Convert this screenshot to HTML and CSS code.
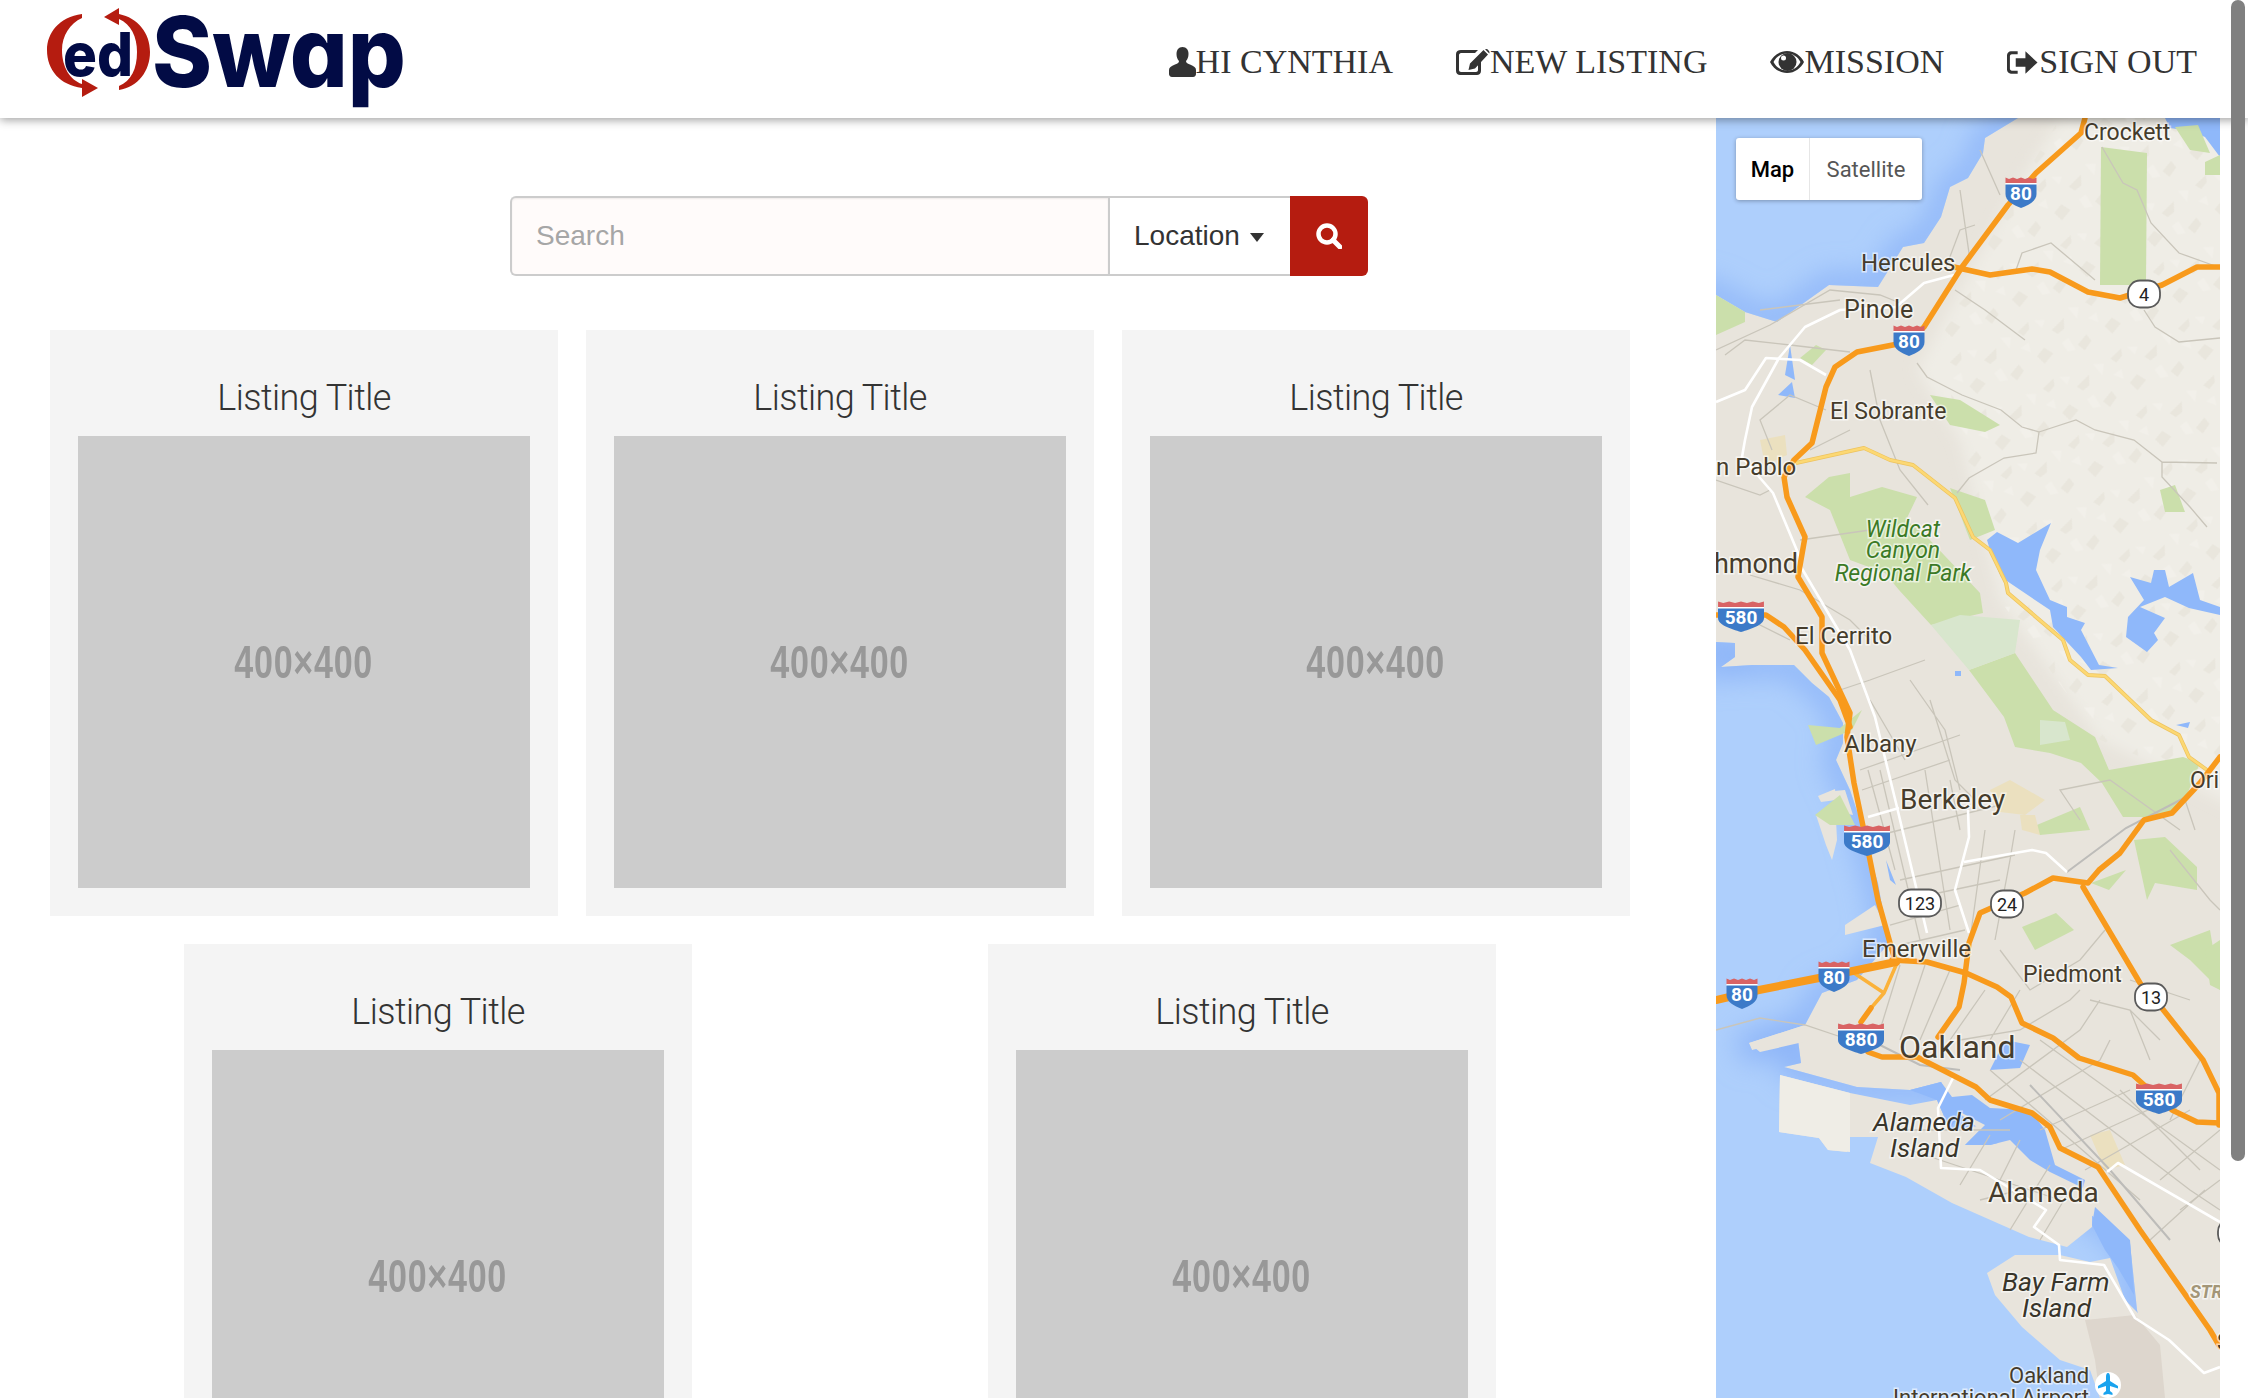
FILE: index.html
```html
<!DOCTYPE html>
<html lang="en">
<head>
<meta charset="utf-8">
<title>edSwap</title>
<link rel="stylesheet" href="styles.css">
</head>
<body>
<header class="topbar">
  <a class="logo" href="#" aria-label="edSwap">
    <svg class="logo-svg" viewBox="0 0 420 118" width="420" height="118">
      <path class="logo-red" d="M82 14C59 17 47 33 47 50C47 70 60 85 82 88L82 97L98 88L82 79L82 84C70 80 62 67 62 50C62 36 70 23 82 18Z"/>
      <path class="logo-red" d="M104 17L119 25L119 19C131 24 137 37 137 52C137 69 131 81 119 86L119 90C138 87 150 71 150 52C150 33 138 18 119 14L119 8Z"/>
      <text class="logo-ed" x="63" y="76" textLength="70" lengthAdjust="spacingAndGlyphs">ed</text>
      <text class="logo-swap" x="152" y="87" textLength="254" lengthAdjust="spacingAndGlyphs">Swap</text>
    </svg>
  </a>
  <nav class="nav">
    <a class="nav-item" href="#">
      <svg class="nav-icon" width="27" height="30" viewBox="0 0 27 30"><path d="M13.500 0C9.500 0 7.500 3 7.500 7C7.500 10 8.500 12.500 10 14C10 15.500 9 16.500 6 17.500C2 19 0 20.500 0 23V27C0 28.500 1 30 3 30H24C26 30 27 28.500 27 27V23C27 20.500 25 19 21 17.500C18 16.500 17 15.500 17 14C18.500 12.500 19.500 10 19.500 7C19.500 3 17.500 0 13.500 0Z"/></svg>
      <span>HI CYNTHIA</span>
    </a>
    <a class="nav-item" href="#">
      <svg class="nav-icon" width="34" height="27" viewBox="0 0 34 27"><path d="M5 1H22L19 4H5C4 4 3 5 3 6V21C3 22 4 23 5 23H20C21 23 22 22 22 21V15L25 12V22C25 24.500 23 26 21 26H4C2 26 0 24.500 0 22V5C0 2.500 2 1 5 1Z"/><path d="M27.500 1L32 5.500L19 19.500L12.500 21L14 14.500ZM29 0.200L30.500 0C31.500 0 33.500 2 33.500 3.500L33.300 4.400Z"/></svg>
      <span>NEW LISTING</span>
    </a>
    <a class="nav-item" href="#">
      <svg class="nav-icon" width="34" height="24" viewBox="0 0 34 24"><path fill-rule="evenodd" d="M17 1C25 1 31 6 34 12C31 18 25 23 17 23C9 23 3 18 0 12C3 6 9 1 17 1ZM17 3.500C11 3.500 6 7 3.500 12C6 17 11 20.500 17 20.500C23 20.500 28 17 30.500 12C28 7 23 3.500 17 3.500Z"/><circle cx="17.500" cy="12" r="9"/><circle class="nav-glint" cx="13.500" cy="8" r="2.500"/></svg>
      <span>MISSION</span>
    </a>
    <a class="nav-item" href="#">
      <svg class="nav-icon" width="32" height="25" viewBox="0 0 33 25"><path d="M4 1H11V4H5C4 4 3 5 3 6V19C3 20 4 21 5 21H11V24H4C2 24 0 22 0 20V5C0 3 2 1 4 1Z"/><path d="M19 1L31.500 12.500L19 24V17H9V8H19Z"/></svg>
      <span>SIGN OUT</span>
    </a>
  </nav>
</header>

<div class="page">
  <main class="content">
    <form class="search">
      <input class="search-input" type="text" placeholder="Search">
      <button class="search-loc" type="button">Location <span class="caret"></span></button>
      <button class="search-go" type="button" aria-label="Search">
        <svg width="26" height="26" viewBox="0 0 26 26"><circle class="search-ring" cx="11" cy="11" r="8.500"/><path class="search-handle" d="M17 17L24 24"/></svg>
      </button>
    </form>
    <section class="listings">
      <article class="card"><h2 class="card-title">Listing Title</h2><div class="thumb"><span class="thumb-label">400×400</span></div></article>
      <article class="card"><h2 class="card-title">Listing Title</h2><div class="thumb"><span class="thumb-label">400×400</span></div></article>
      <article class="card"><h2 class="card-title">Listing Title</h2><div class="thumb"><span class="thumb-label">400×400</span></div></article>
      <article class="card"><h2 class="card-title">Listing Title</h2><div class="thumb"><span class="thumb-label">400×400</span></div></article>
      <article class="card"><h2 class="card-title">Listing Title</h2><div class="thumb"><span class="thumb-label">400×400</span></div></article>
    </section>
  </main>

  <aside class="map">
    <svg class="map-svg" viewBox="1716 118 504 1280" width="504" height="1280">
      <defs>
        <filter id="soft" x="-10%" y="-10%" width="120%" height="120%"><feGaussianBlur stdDeviation="14"/></filter>
        <filter id="softer" x="-10%" y="-10%" width="120%" height="120%"><feGaussianBlur stdDeviation="7"/></filter>
        <pattern id="tex" width="74" height="62" patternUnits="userSpaceOnUse" patternTransform="rotate(-24)">
          <path class="tex-dark" d="M6 8L20 3L18 10L10 14ZM38 20L54 14L50 24L42 26ZM14 38L24 33L30 42L18 48ZM56 44L68 38L70 46L60 52Z"/>
          <path class="tex-light" d="M26 4L36 8L30 14ZM2 24L12 22L10 32ZM42 36L50 34L52 48L44 46ZM62 6L72 10L66 20Z"/>
        </pattern>
        <path id="north-bay" d="M1650 60H2050L2018 118L1985 138L1983 153L1968 178L1950 187L1941 217L1924 243L1903 247L1878 287L1829 285L1777 322L1745 312L1716 295L1650 280Z"/>
        <path id="main-bay" d="M1650 642L1716 642L1735 643L1735 657L1721 667L1752 665L1794 665L1812 683L1829 697L1843 723L1843 743L1836 760L1850 790L1861 823L1868 850L1878 883L1884 917L1889 943L1857 980L1822 993L1805 1025L1749 1043L1752 1050L1798 1040L1801 1063L1784 1067L1857 1087L1910 1090L1941 1082L1955 1110L2070 1200L2130 1243L2137 1310L2170 1450H1650Z"/>
        <clipPath id="clip-north"><use href="#north-bay"/></clipPath>
        <clipPath id="clip-main"><use href="#main-bay"/></clipPath>
        <path id="shield" d="M-15.500 -10L-15.500 -15.500L-12 -14L-8 -15.500L-4 -14L0 -15.500L4 -14L8 -15.500L12 -14L15.500 -15.500L15.500 -10Z"/>
      </defs>

      <rect class="land" x="1716" y="118" width="504" height="1280"/>
      <path class="hills" filter="url(#softer)" d="M2010 200L2060 118H2240V810L2100 740L2000 600L1980 520L1960 440L1917 370Z"/>
      <path class="texture" d="M1940 340L2010 200L2060 118H2220V790L2100 740L2000 600L1980 520L1960 440Z"/>

      <use class="water" href="#north-bay"/>
      <g clip-path="url(#clip-north)"><use class="water-edge" href="#north-bay" filter="url(#soft)"/></g>
      <use class="water" href="#main-bay"/>
      <g clip-path="url(#clip-main)"><use class="water-edge" href="#main-bay" filter="url(#soft)"/></g>
      <path class="water-flat" d="M2165 118H2220V157L2205 137L2190 131L2170 128Z"/>

      <!-- islands and shoreline land -->
      <path class="land" d="M1780 1075L1850 1093L1910 1105L1937 1100L1950 1130L1985 1125L1965 1145L1990 1145L2010 1140L2030 1160L2050 1172L2083 1188L2092 1207L2092 1227L2067 1247L2029 1237L1952 1203L1906 1177L1870 1163L1878 1137L1847 1137L1847 1152L1828 1150L1819 1138L1779 1132Z"/>
      <path class="pale-land" d="M1780 1075L1850 1093L1850 1152L1828 1150L1819 1138L1779 1132Z"/>
      <path class="land" d="M2015 1255L2060 1255L2090 1262L2110 1258L2125 1300L2137 1312L2160 1340L2170 1398H2100L2090 1370L2060 1360L2022 1327L1995 1295L1987 1273Z"/>
      <path class="tarmac" d="M2085 1320L2135 1315L2160 1345L2165 1398H2100L2095 1360Z"/>
      <path class="land" d="M1749 1043L1805 1025L1822 1012L1812 1040L1760 1052Z"/>
      <path class="land" d="M1834 791L1845 790L1853 815L1838 812ZM1818 796L1835 789L1836 800L1821 802ZM1837 840L1832 860L1826 845L1816 815L1836 820Z"/>
      <path class="land" d="M1845 925L1875 905L1885 925L1845 935Z"/>
      <path class="water-flat" d="M1987 540L1997 532L2018 543L2051 523L2040 550L2036 570L2050 600L2067 607L2067 617L2085 623L2081 630L2099 665L2118 668L2091 670L2081 657L2053 627L2050 610L2001 577L1990 550Z"/>
      <path class="water-flat" d="M2130 577L2151 583L2154 570L2165 570L2169 587L2193 573L2200 600L2220 607V615L2189 608L2165 597L2140 607L2165 618L2154 633L2158 640L2147 652L2126 637L2128 617L2144 600Z"/>
      <path class="water-flat" d="M1910 1090L1941 1082L1952 1097L1972 1095L1990 1108L2030 1110L2045 1130L2055 1165L2085 1180L2083 1188L2050 1172L2030 1160L2010 1140L1990 1145L1965 1145L1985 1125L1960 1112L1950 1130L1937 1100Z"/>
      <path class="water-flat" d="M1790 345L1795 380L1785 375ZM2095 1207L2130 1240L2134 1295L2118 1268L2105 1250L2092 1225Z"/>
      <path class="water-flat" d="M1778 395L1792 382L1795 398ZM1955 671H1961V676H1955ZM2016 702L2022 705L2023 712L2018 712ZM2176 725L2190 722L2188 728ZM1886 860L1896 885L1890 880ZM1990 1070L2005 1040L2030 1045L2020 1068Z"/>

      <!-- parks -->
      <g class="park">
        <path d="M2101 147L2147 153L2146 285L2100 285Z"/>
        <path d="M1805 497L1829 477L1850 473L1850 497L1882 487L1917 497L1906 520L1927 537L1980 593L1983 613L1931 625L1899 590L1885 573L1850 560L1830 510Z"/>
        <path d="M1969 670L2015 653L2053 710L2095 737L2109 770L2183 757L2200 763L2186 797L2165 817L2123 817L2102 783L2081 763L2050 753L2015 747L2004 717Z"/>
        <path d="M2032 827L2080 807L2090 830L2040 835Z"/>
        <path d="M2134 840L2165 837L2197 867L2197 890L2155 883L2147 900Z"/>
        <path d="M2022 927L2056 913L2074 930L2035 950Z"/>
        <path d="M2091 883L2126 870L2109 890Z"/>
        <path d="M1930 395L1960 400L2000 425L1985 432L1950 425Z"/>
        <path d="M1716 295L1745 312L1745 322L1716 335Z"/>
        <path d="M1950 488L1985 500L1995 530L1970 540Z"/>
        <path d="M2160 490L2175 485L2185 512L2165 512Z"/>
        <path d="M2175 127L2198 125L2210 153L2190 150Z"/>
        <path d="M2205 162L2220 155V175L2205 175Z"/>
        <path d="M1816 345L1826 350L1812 365L1800 358Z"/>
        <path d="M1815 815L1840 795L1855 825L1830 825Z"/>
        <path d="M1862 710L1852 730L1816 745L1812 735L1808 725L1840 728Z"/>
        <path d="M2170 945L2210 930L2220 990L2190 960Z"/>
        <path d="M2220 940L2205 950L2210 985L2220 990Z"/>
      </g>
      <path class="park-pale" d="M1931 625L1960 615L2020 620L2015 653L1969 670Z"/>
      <path class="park-pale" d="M2040 720L2065 722L2070 740L2040 745Z"/>
      <path class="sand" d="M1760 440L1785 435L1787 455L1765 465ZM1990 790L2010 780L2045 800L2025 815L2000 812ZM2020 815L2035 815L2040 835L2022 830ZM2090 1135L2110 1130L2125 1165L2105 1170Z"/>

      <!-- minor streets -->
      <g class="streets">
        <path d="M1716 350L1770 325L1830 290L1880 295L1905 305"/>
        <path d="M1725 355L1745 340L1790 345L1850 352"/>
        <path d="M1960 190L1970 260M1980 150L2000 195M1945 270L1960 230L1975 225M1955 290L1985 310L2025 340"/>
        <path d="M1870 370L1880 420L1900 470L1928 505M1917 363L1927 377L1962 395L2001 410L2022 427L2039 432L2036 453L2004 458L1969 478L1957 493"/>
        <path d="M2039 432L2076 420L2095 430L2134 440L2162 462L2217 463M2162 462V477L2190 507L2207 527"/>
        <path d="M2016 270L2022 253L2051 243L2095 280M2144 310L2155 327L2179 342L2220 338M2102 147L2123 183L2137 190L2151 223L2179 253L2218 267"/>
        <path d="M1826 410L1790 395L1760 420L1772 450M1850 430L1810 450M1760 310L1840 300M1716 480L1760 495L1770 490"/>
        <path d="M1750 575L1800 590L1850 620L1870 640M1750 620L1790 640M1840 690L1870 680L1925 660M1800 540L1870 530M2080 820L2060 790L2110 780L2180 830"/>
        <path d="M1860 770L1960 735M1862 790L1950 760M1880 835L2000 805M1900 880L2015 855M1905 900L2000 880M1890 925L1960 905M1900 945L1965 930"/>
        <path d="M1868 770L1895 870M1880 770L1920 940M1925 770L1950 930M1950 780L1960 830M1930 700L1955 780L1975 800M1910 680L1945 730L1960 790M1985 830L1970 940M2015 830L2010 860L1995 940M1870 700L1905 760"/>
        <path d="M1900 965L1880 1030M1925 965L1900 1040M1950 970L1920 1040M1985 990L1950 1040M2020 990L1990 1040M1960 1040L2020 1030L2070 1000L2080 990M1985 1100L2080 1030L2100 1000M2000 1120L2100 1060L2110 1040"/>
        <path d="M2040 1130L2130 1090M2060 1150L2170 1100M2085 1170L2190 1110M2020 1060L2190 1190L2220 1210M1990 1070L2140 1200M2040 1040L2220 1170M2120 1090L2200 1170M2150 1240L2205 1190M2000 950L2030 990L2080 960L2105 930M2090 1000L2130 1010L2160 1040M2150 1060L2130 1010"/>
        <path d="M1900 1130L2010 1130M1910 1150L2060 1200M1990 1135L1960 1185M2020 1140L1990 1200M2050 1165L2010 1230M2070 1190L2040 1240M1980 1200L2020 1190"/>
        <path d="M2160 1180L2220 1130M2180 1210L2220 1180M2200 1060L2170 1120M1716 1030L1760 1018L1805 1025L1850 1040"/>
        <path d="M2170 850L2210 900L2220 910M2205 780L2185 800L2195 830M2130 980L2190 1000"/>
      </g>
      <path class="rail" d="M2067 872L2126 828L2186 797"/>
      <path class="rail" d="M1880 1045L1920 1065L1960 1070M2030 1085L2110 1170L2170 1240"/>

      <!-- surface roads -->
      <g class="white-road">
        <path d="M1954 275L1924 283L1896 307L1840 310L1805 327L1779 358L1752 407L1745 440L1742 457L1773 493L1798 553L1801 567L1850 650L1875 717L1896 803L1927 933"/>
        <path d="M1716 402L1745 390L1766 358L1800 360L1826 375"/>
        <path d="M1868 817L1899 808M1968 810L1969 837L1955 890L1969 933M1964 862L2032 850L2046 853L2067 872"/>
        <path d="M1953 1078L1938 1108L1941 1168L1980 1170L2046 1210L2034 1227L2059 1245L2060 1260L2104 1265L2135 1318L2169 1340L2204 1373L2220 1367"/>
        <path d="M2107 1172L2118 1163L2220 1222"/>
      </g>

      <!-- state routes -->
      <path class="yellow-case" d="M1796 463L1864 448L1890 460L1913 465L1955 498L1973 537L1990 550L2006 583L2008 593L2063 640L2070 660L2088 675L2105 676L2151 720L2179 735L2189 757L2207 770"/>
      <path class="yellow" d="M1796 463L1864 448L1890 460L1913 465L1955 498L1973 537L1990 550L2006 583L2008 593L2063 640L2070 660L2088 675L2105 676L2151 720L2179 735L2189 757L2207 770"/>
      <g class="ramp">
        <path d="M1897 963L1884 993L1871 1008M1854 973L1884 993"/>
      </g>

      <!-- freeways -->
      <g class="freeway">
        <path d="M2085 118L2081 133L2036 173L2008 205L1962 267L1924 327L1908 342L1857 352L1835 367L1826 387L1812 443L1794 460L1784 477L1787 497L1805 537L1798 577L1822 617L1822 653L1850 713L1847 737L1854 783L1868 850L1878 900L1892 950L1896 963"/>
        <path class="bridge" d="M1896 962L1819 978L1759 990L1716 1000"/>
        <path d="M1716 615L1766 615L1784 627L1805 650L1840 700L1850 727"/>
        <path d="M1954 267L1990 275L2032 269L2050 272L2088 292L2120 298L2162 285L2197 267L2220 267"/>
        <path d="M2220 757L2200 783L2172 813L2144 820L2120 853L2099 870L2088 883L2053 878L2025 893L1980 913L1969 943L1964 983L1959 1007L1938 1037"/>
        <path d="M1892 960L1927 962L1966 973L1997 987L2011 997L2022 1023L2053 1038L2079 1058L2133 1075L2172 1110L2197 1122L2220 1123"/>
        <path d="M2083 887L2140 983L2161 1007L2203 1060L2219 1093V1125"/>
        <path d="M1871 1008L1861 1022"/>
        <path d="M1868 1052L1882 1057L1917 1057L1976 1087L1990 1100L2032 1113L2050 1127L2060 1148L2098 1167L2140 1230L2210 1330L2220 1347"/>
      </g>

      <!-- labels -->
      <g class="labels">
        <text class="f23" x="2084" y="140">Crockett</text>
        <text class="f24" x="1861" y="271">Hercules</text>
        <text class="f25" x="1844" y="318">Pinole</text>
        <text class="f23" x="1830" y="419">El Sobrante</text>
        <text class="f24" x="1716" y="475">n Pablo</text>
        <text class="f27 end" x="1798" y="573">Richmond</text>
        <text class="f24" x="1795" y="644">El Cerrito</text>
        <text class="f24" x="1844" y="752">Albany</text>
        <text class="f28" x="1900" y="809">Berkeley</text>
        <text class="f23" x="2190" y="788">Ori</text>
        <text class="f24" x="1862" y="957">Emeryville</text>
        <text class="f23" x="2023" y="982">Piedmont</text>
        <text class="f32" x="1899" y="1058">Oakland</text>
        <text class="f26 it" x="1873" y="1131">Alameda</text>
        <text class="f26 it" x="1890" y="1157">Island</text>
        <text class="f28" x="1988" y="1202">Alameda</text>
        <text class="f26 it" x="2002" y="1291">Bay Farm</text>
        <text class="f26 it" x="2022" y="1317">Island</text>
        <text class="f22" x="2009" y="1383">Oakland</text>
        <text class="f22" x="1893" y="1405">International Airport</text>
        <text class="f23" x="2217" y="1350">San</text>
        <text class="str" x="2190" y="1298">STR</text>
        <text class="green mid" x="1903" y="537">Wildcat</text>
        <text class="green mid" x="1903" y="558">Canyon</text>
        <text class="green mid" x="1903" y="581">Regional Park</text>
      </g>

      <!-- interstate shields -->
      <g class="shield" transform="translate(2021 193)"><use class="sh-red" href="#shield"/><rect class="sh-line" x="-15.500" y="-10" width="31" height="2"/><path class="sh-blue" d="M-15.500 -8.500H15.500V1C15.500 8 8 12 0 15C-8 12 -15.500 8 -15.500 1Z"/><text y="6.500">80</text></g>
      <g class="shield" transform="translate(1909 341)"><use class="sh-red" href="#shield"/><rect class="sh-line" x="-15.500" y="-10" width="31" height="2"/><path class="sh-blue" d="M-15.500 -8.500H15.500V1C15.500 8 8 12 0 15C-8 12 -15.500 8 -15.500 1Z"/><text y="6.500">80</text></g>
      <g class="shield" transform="translate(1834 977)"><use class="sh-red" href="#shield"/><rect class="sh-line" x="-15.500" y="-10" width="31" height="2"/><path class="sh-blue" d="M-15.500 -8.500H15.500V1C15.500 8 8 12 0 15C-8 12 -15.500 8 -15.500 1Z"/><text y="6.500">80</text></g>
      <g class="shield" transform="translate(1742 994)"><use class="sh-red" href="#shield"/><rect class="sh-line" x="-15.500" y="-10" width="31" height="2"/><path class="sh-blue" d="M-15.500 -8.500H15.500V1C15.500 8 8 12 0 15C-8 12 -15.500 8 -15.500 1Z"/><text y="6.500">80</text></g>
      <g class="shield" transform="translate(1741 617)"><use class="sh-red wide" href="#shield"/><rect class="sh-line" x="-23" y="-10" width="46" height="2"/><path class="sh-blue" d="M-23 -8.500H23V1C23 8 10 12 0 15C-10 12 -23 8 -23 1Z"/><text y="6.500">580</text></g>
      <g class="shield" transform="translate(1867 841)"><use class="sh-red wide" href="#shield"/><rect class="sh-line" x="-23" y="-10" width="46" height="2"/><path class="sh-blue" d="M-23 -8.500H23V1C23 8 10 12 0 15C-10 12 -23 8 -23 1Z"/><text y="6.500">580</text></g>
      <g class="shield" transform="translate(2159 1099)"><use class="sh-red wide" href="#shield"/><rect class="sh-line" x="-23" y="-10" width="46" height="2"/><path class="sh-blue" d="M-23 -8.500H23V1C23 8 10 12 0 15C-10 12 -23 8 -23 1Z"/><text y="6.500">580</text></g>
      <g class="shield" transform="translate(1861 1039)"><use class="sh-red wide" href="#shield"/><rect class="sh-line" x="-23" y="-10" width="46" height="2"/><path class="sh-blue" d="M-23 -8.500H23V1C23 8 10 12 0 15C-10 12 -23 8 -23 1Z"/><text y="6.500">880</text></g>

      <!-- state shields -->
      <g class="route" transform="translate(2144 294)"><rect x="-16" y="-13.500" width="32" height="27" rx="12"/><text y="6.500">4</text></g>
      <g class="route" transform="translate(1920 903)"><rect x="-21" y="-13.500" width="42" height="27" rx="12"/><text y="6.500">123</text></g>
      <g class="route" transform="translate(2007 904)"><rect x="-16" y="-13.500" width="32" height="27" rx="12"/><text y="6.500">24</text></g>
      <g class="route" transform="translate(2151 997)"><rect x="-16" y="-13.500" width="32" height="27" rx="12"/><text y="6.500">13</text></g>
      <g class="route" transform="translate(2234 1233)"><rect x="-16" y="-13.500" width="32" height="27" rx="12"/><text x="-8" y="6.500">1</text></g>

      <!-- airport -->
      <circle class="plane-bg" cx="2108" cy="1385" r="13"/>
      <path class="plane" d="M2108 1373C2109.500 1373 2110 1375 2110 1377V1381L2118 1386V1388.500L2110 1386V1391L2112.500 1393V1395L2108 1394L2103.500 1395V1393L2106 1391V1386L2098 1388.500V1386L2106 1381V1377C2106 1375 2106.500 1373 2108 1373Z"/>
    </svg>
    <div class="map-type">
      <span class="map-type-on">Map</span>
      <span class="map-type-off">Satellite</span>
    </div>
  </aside>
</div>
<div class="scroll-thumb"></div>
</body>
</html>
```
FILE: styles.css
```css
* { box-sizing: border-box; }

html, body { margin: 0; height: 100%; }

body {
  position: relative;
  height: 100vh;
  overflow: hidden;
  display: flex;
  flex-direction: column;
  background: #fff;
  color: #333;
  font-family: "Liberation Sans", Arial, sans-serif;
}

/* ---------- header ---------- */
.topbar {
  position: relative;
  z-index: 3;
  flex: none;
  height: 118px;
  display: flex;
  align-items: flex-start;
  justify-content: space-between;
  padding-right: 51px;
  background: #fff;
  box-shadow: 0 2px 9px rgba(0, 0, 0, .38);
}

.logo { display: block; height: 118px; }
.logo-svg { display: block; }
.logo-red { fill: #b51c10; }
.logo-ed, .logo-swap {
  fill: #020b45;
  font-family: Inter, "Liberation Sans", sans-serif;
  font-feature-settings: "cv11" 1;
}
.logo-ed { font-size: 60px; font-weight: 800; }
.logo-swap { font-size: 98px; font-weight: 800; }

.nav { display: flex; gap: 63px; padding-top: 44px; }
.nav-item {
  display: flex;
  align-items: center;
  height: 36px;
  color: #333;
  text-decoration: none;
  font-family: "Liberation Serif", "Times New Roman", serif;
  font-size: 34px;
  line-height: 36px;
  white-space: nowrap;
}
.nav-icon { display: block; flex: none; fill: #333; }
.nav-glint { fill: #fff; }

/* ---------- layout ---------- */
.page { flex: 1; min-height: 0; display: flex; }
.content {
  width: 1716px;
  flex: none;
  overflow: hidden;
  padding: 78px 72px 0 36px;
}

/* ---------- search ---------- */
.search {
  display: flex;
  width: 858px;
  height: 80px;
  margin-left: 474px;
}
.search-input {
  flex: 1;
  min-width: 0;
  height: 80px;
  padding: 0 24px;
  border: 2px solid #ccc;
  border-right: 0;
  border-radius: 6px 0 0 6px;
  background: #fffbfa;
  box-shadow: inset 0 1px 2px rgba(0, 0, 0, .07);
  color: #333;
  font: 28px "Liberation Sans", Arial, sans-serif;
}
.search-input::placeholder { color: #a6a6a6; opacity: 1; }
.search-loc {
  flex: none;
  width: 182px;
  height: 80px;
  padding: 0 0 0 24px;
  text-align: left;
  background: #fff;
  border: 2px solid #ccc;
  border-right: 0;
  color: #333;
  font: 28px "Liberation Sans", Arial, sans-serif;
}
.caret {
  display: inline-block;
  margin-left: 2px;
  vertical-align: middle;
  border-top: 9px solid #333;
  border-left: 7.500px solid transparent;
  border-right: 7.500px solid transparent;
}
.search-go {
  flex: none;
  width: 78px;
  height: 80px;
  padding: 0;
  display: flex;
  align-items: center;
  justify-content: center;
  border: 0;
  border-radius: 0 6px 6px 0;
  background: #b51c10;
}
.search-ring { fill: none; stroke: #fff; stroke-width: 4.500; }
.search-handle { fill: none; stroke: #fff; stroke-width: 5; stroke-linecap: round; }

/* ---------- listings ---------- */
.listings {
  display: flex;
  flex-wrap: wrap;
  justify-content: space-around;
  width: 1608px;
  margin-top: 40px;
}
.card {
  width: 508px;
  margin: 14px;
  padding: 0 28px 28px;
  background: #f4f4f4;
}
.card-title {
  margin: 0;
  height: 106px;
  padding-top: 47px;
  text-align: center;
  color: #333;
  font-family: Roboto, "Liberation Sans", sans-serif;
  font-size: 36px;
  font-weight: 300;
  letter-spacing: -.55px;
  line-height: 42px;
}
.thumb {
  height: 452px;
  display: flex;
  align-items: center;
  justify-content: center;
  background: #ccc;
  color: #989898;
}
.thumb-label {
  display: block;
  font-family: "Liberation Sans", sans-serif;
  font-size: 46px;
  font-weight: 700;
  letter-spacing: 1px;
  transform: scaleX(.74);
}

/* ---------- map ---------- */
.map {
  position: relative;
  flex: none;
  width: 504px;
  height: 1280px;
  overflow: hidden;
}
.map-svg { display: block; }
.land { fill: #e8e4dc; }
.hills { fill: #efede6; }
.pale-land { fill: #efede6; }
.texture { fill: url(#tex); }
.tex-dark { fill: #e9e6dd; }
.tex-light { fill: #f2f0ea; }
.tarmac { fill: #ddd6cd; }
.water { fill: #aecffc; }
.water-edge { fill: none; stroke: #8cb4f8; stroke-width: 22; }
.water-flat { fill: #8fb8fa; }
.park path { fill: #cbdfab; }
.park-pale { fill: #d8e6cd; }
.sand { fill: #ebe0bf; }

.streets path { fill: none; stroke: #c9c5ba; stroke-width: 1.300; }
.rail { fill: none; stroke: #bdbcb9; stroke-width: 2; }
.white-road path { fill: none; stroke: #fff; stroke-width: 2.600; stroke-linejoin: round; }
.yellow-case { fill: none; stroke: #edc35f; stroke-width: 4; stroke-linejoin: round; }
.yellow { fill: none; stroke: #fcd873; stroke-width: 2.500; stroke-linejoin: round; }
.ramp path { fill: none; stroke: #fbb23a; stroke-width: 3.500; stroke-linejoin: round; }
.freeway path { fill: none; stroke: #f89a1c; stroke-width: 5.500; stroke-linejoin: round; stroke-linecap: round; }
.freeway .bridge { stroke-width: 8; }

.labels text {
  fill: #453c2c;
  stroke: rgba(255, 255, 255, .62);
  stroke-width: 3px;
  paint-order: stroke;
  font-family: Roboto, "Liberation Sans", sans-serif;
}
.labels .f22 { font-size: 22px; }
.labels .f23 { font-size: 23px; }
.labels .f24 { font-size: 24px; }
.labels .f25 { font-size: 25px; }
.labels .f26 { font-size: 26.500px; }
.labels .f27 { font-size: 27px; }
.labels .f28 { font-size: 28px; }
.labels .f32 { font-size: 32px; }
.labels .it { font-style: italic; fill: #38352b; }
.labels .end { text-anchor: end; }
.labels .mid { text-anchor: middle; }
.labels .str { fill: #a39678; font-size: 18px; font-style: italic; font-weight: 700; }
.labels .green { fill: #3b7a26; font-size: 23px; font-style: italic; }

.shield text {
  fill: #fff;
  font-family: Roboto, "Liberation Sans", sans-serif;
  font-size: 19px;
  font-weight: 700;
  text-anchor: middle;
}
.sh-red { fill: #d96364; }
.sh-red.wide { transform: scaleX(1.480); }
.sh-line { fill: #fff; }
.sh-blue { fill: #3c7ac8; }

.route rect { fill: #fff; stroke: #5a5a5a; stroke-width: 1.800; }
.route text {
  fill: #222;
  font-family: Roboto, "Liberation Sans", sans-serif;
  font-size: 18px;
  text-anchor: middle;
}
.plane-bg { fill: #fff; }
.plane { fill: #1aa3ee; }

.map-type {
  position: absolute;
  top: 20px;
  left: 20px;
  width: 186px;
  height: 62px;
  display: flex;
  align-items: center;
  background: #fff;
  border-radius: 3px;
  box-shadow: 0 1px 4px rgba(0, 0, 0, .3);
  font-family: Roboto, "Liberation Sans", sans-serif;
  font-size: 22px;
}
.map-type-on {
  width: 74px;
  height: 100%;
  display: flex;
  align-items: center;
  justify-content: center;
  color: #000;
  font-weight: 500;
  border-right: 1px solid #e6e6e6;
}
.map-type-off {
  flex: 1;
  text-align: center;
  color: #565656;
}

/* ---------- scrollbar ---------- */
.scroll-thumb {
  position: absolute;
  z-index: 4;
  top: 0;
  left: 2231px;
  width: 14px;
  height: 1161px;
  border-radius: 7px;
  background: #808080;
}
```
